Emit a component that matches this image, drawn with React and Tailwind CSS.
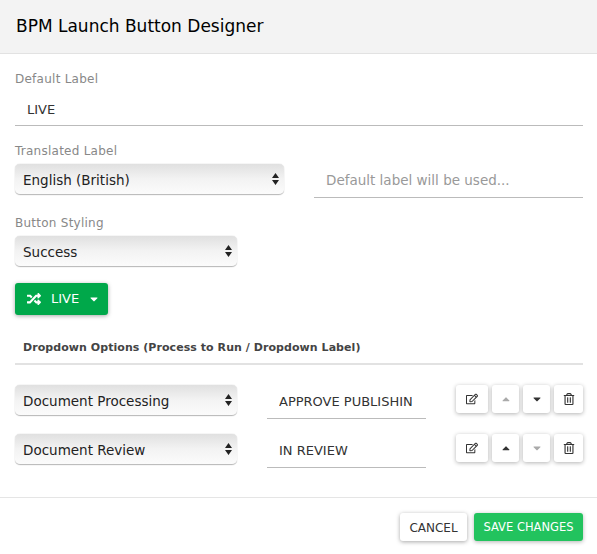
import { FaRandom, FaRegEdit, FaRegTrashAlt, FaCaretUp, FaCaretDown } from 'react-icons/fa';

function Select({ value, className }) {
  return (
    <div className={`relative h-[31px] shrink-0 ${className}`}>
      <select
        defaultValue={value}
        className="w-full h-full appearance-none rounded-[5px] pl-2 pr-6 pt-[3px] text-[13.5px] text-[#222] bg-linear-to-b from-[#e0e0e0] via-[#f3f3f3] to-[#fbfbfb] border-b border-[#bdbdbd] shadow-[0_0_1px_rgba(0,0,0,0.35)] outline-none"
      >
        <option>{value}</option>
      </select>
      <svg className="absolute right-[5px] top-[9px] pointer-events-none" width="7" height="12" viewBox="0 0 7 12">
        <path d="M3.5 0L7 5H0zM3.5 12L0 7h7z" fill="#222" />
      </svg>
    </div>
  );
}

function Field({ value, placeholder, className }) {
  return (
    <input
      readOnly
      defaultValue={value}
      placeholder={placeholder}
      className={`h-[33px] pl-3 pr-[14px] border-b border-[#bbb] text-[13px] text-[#333] placeholder:text-[#999] placeholder:text-[13.5px] outline-none ${className}`}
    />
  );
}

function IconButton({ children, disabled, className }) {
  return (
    <div
      className={`h-[28px] flex items-center justify-center rounded-[3px] bg-white shadow-[0_1px_4px_rgba(0,0,0,0.3)] ${disabled ? 'text-[#aaa]' : 'text-[#333]'} ${className}`}
    >
      {children}
    </div>
  );
}

function OptionRow({ process, label, upDisabled, downDisabled }) {
  return (
    <div className="flex items-start h-[49px]">
      <Select value={process} className="w-[222px]" />
      <Field value={label} className="w-[159px] ml-[30px] mt-[1px] pb-[2px]" />
      <div className="flex gap-[4px] ml-[30px]">
        <IconButton className="w-[32px]"><FaRegEdit size={12} /></IconButton>
        <IconButton disabled={upDisabled} className="w-[27px]"><FaCaretUp size={12} /></IconButton>
        <IconButton disabled={downDisabled} className="w-[27px]"><FaCaretDown size={12} /></IconButton>
        <IconButton className="w-[29px]"><FaRegTrashAlt size={12} /></IconButton>
      </div>
    </div>
  );
}

const labelClass = 'block text-[12px] leading-[18px] tracking-[0.25px] text-[#888]';

export default function App() {
  return (
    <div className="w-[597px] h-[554px] bg-white font-['DejaVu_Sans',sans-serif]">
      <div className="h-[54px] px-[16px] flex items-center bg-[#f3f3f3] border-b border-[#e2e2e2]">
        <h1 className="text-[17px] text-black">BPM Launch Button Designer</h1>
      </div>

      <div className="pl-[15px] pr-[14px] pt-[16px] h-[444px] border-b border-[#e5e5e5]">
        <label className={labelClass}>Default Label</label>
        <Field value="LIVE" className="w-full mt-[5px] block" />

        <label className={`${labelClass} mt-[16px]`}>Translated Label</label>
        <div className="flex mt-[4px]">
          <Select value="English (British)" className="w-[269px]" />
          <Field placeholder="Default label will be used..." className="w-[269px] ml-[30px] mt-[1px] pb-[2px]" />
        </div>

        <label className={`${labelClass} mt-[16px]`}>Button Styling</label>
        <Select value="Success" className="w-[222px] mt-[4px]" />

        <div className="mt-[16px] w-[93px] h-[32px] pl-[12px] flex items-center rounded-[3px] bg-[#00a84a] text-white text-[13px] shadow-[0_1px_4px_rgba(0,0,0,0.35)]">
          <FaRandom size={14} />
          <span className="ml-[10px]">LIVE</span>
          <FaCaretDown size={12} className="ml-[9px]" />
        </div>

        <div className="mt-[21px] h-[29px] pl-2 pt-[4px] border-b-2 border-[#e2e2e2] text-[11px] tracking-[0.06px] font-bold text-[#444]">
          Dropdown Options (Process to Run / Dropdown Label)
        </div>

        <div className="mt-[20px]">
          <OptionRow process="Document Processing" label="APPROVE PUBLISHING" upDisabled />
          <OptionRow process="Document Review" label="IN REVIEW" downDisabled />
        </div>
      </div>

      <div className="flex justify-end gap-[7px] px-[14px] pt-[15px]">
        <div className="h-[28px] w-[67px] pt-[1px] flex items-center justify-center rounded-[3px] bg-white text-[12px] text-[#333] shadow-[0_1px_4px_rgba(0,0,0,0.35)]">CANCEL</div>
        <div className="h-[28px] w-[109px] pt-[1px] flex items-center justify-center rounded-[3px] bg-[#22c35e] text-[11.5px] text-white shadow-[0_1px_4px_rgba(0,0,0,0.3)]">SAVE CHANGES</div>
      </div>
    </div>
  );
}
